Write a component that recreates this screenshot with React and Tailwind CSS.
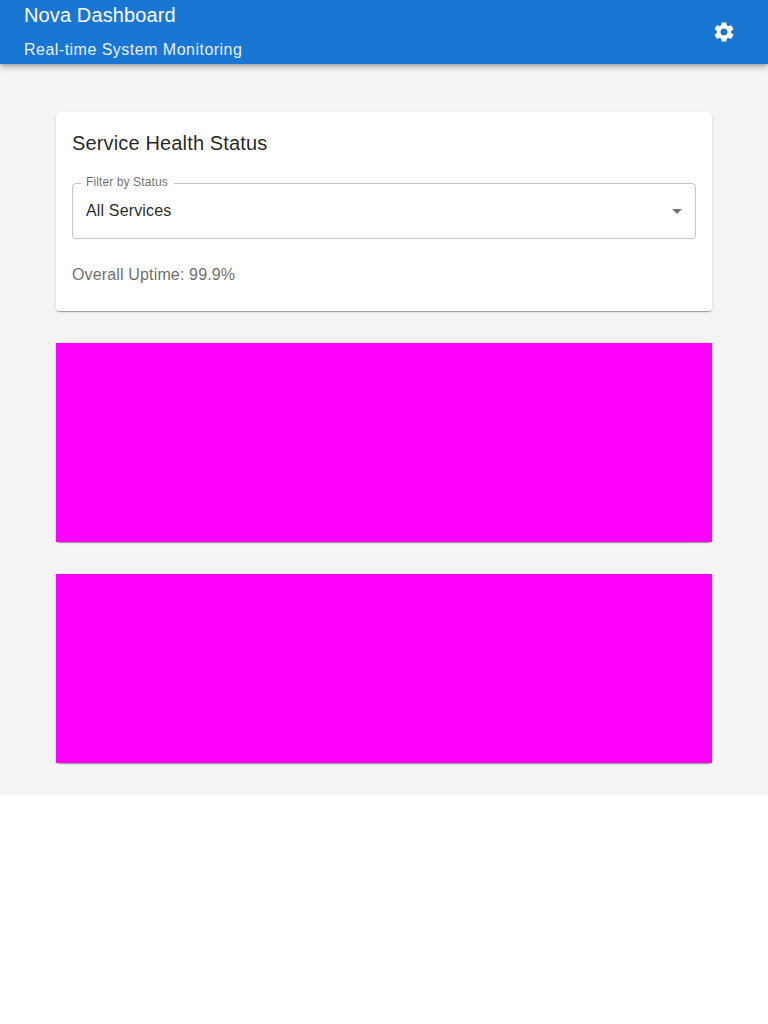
import React from "react";
import { MdSettings, MdArrowDropDown } from "react-icons/md";

const elevation1 =
  "shadow-[0px_2px_1px_-1px_rgba(0,0,0,0.2),0px_1px_1px_0px_rgba(0,0,0,0.14),0px_1px_3px_0px_rgba(0,0,0,0.12)]";
const elevation4 =
  "shadow-[0px_2px_4px_-1px_rgba(0,0,0,0.2),0px_4px_5px_0px_rgba(0,0,0,0.14),0px_1px_10px_0px_rgba(0,0,0,0.12)]";

function Header() {
  return (
    <header className={`relative flex h-16 items-center justify-between bg-[#1976d2] px-6 text-white ${elevation4}`}>
      <div className="flex flex-col gap-px pt-[3px]">
        <h1 className="text-xl leading-8 tracking-[0.12px]">Nova Dashboard</h1>
        <p className="text-base leading-9 tracking-[0.48px] opacity-90">Real-time System Monitoring</p>
      </div>
      <button aria-label="Settings" className="flex size-10 items-center justify-center rounded-full">
        <MdSettings className="size-6" />
      </button>
    </header>
  );
}

function StatusFilter() {
  return (
    <div className="relative mt-[25px] flex h-14 items-center justify-between rounded border border-black/[0.23] pr-[6px] pl-[13px]">
      <span className="absolute -top-[9px] left-2 bg-white pr-[6px] pl-[5px] text-xs leading-[14px] tracking-[0.11px] text-black/60">
        Filter by Status
      </span>
      <span className="text-base leading-6 tracking-[0.15px] text-black/[0.87]">All Services</span>
      <MdArrowDropDown className="size-6 text-black/[0.54]" />
    </div>
  );
}

export default function App() {
  return (
    <div className="min-h-screen bg-white font-['Liberation_Sans',Arial,sans-serif]">
      <Header />
      <main className="flex h-[731px] flex-col gap-8 bg-[#f5f5f5] px-14 pt-12">
        <section className={`h-[199px] rounded bg-white px-4 pt-4 ${elevation1}`}>
          <h2 className="text-xl leading-[30px] tracking-[0.15px] text-black/[0.87]">Service Health Status</h2>
          <StatusFilter />
          <p className="mt-6 text-base leading-6 tracking-[0.15px] text-black/60">Overall Uptime: 99.9%</p>
        </section>
        <section className={`h-[199px] rounded ${elevation1}`}>
          <div className="h-full bg-[#ff00ff]" />
        </section>
        <section className={`h-[189px] rounded ${elevation1}`}>
          <div className="h-full bg-[#ff00ff]" />
        </section>
      </main>
    </div>
  );
}
